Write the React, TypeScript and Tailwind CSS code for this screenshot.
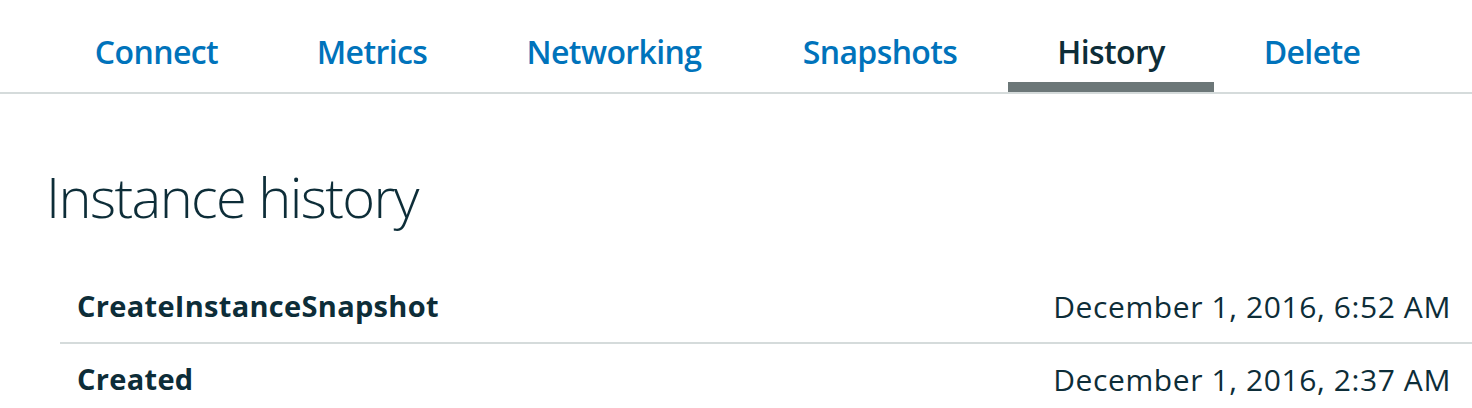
import React from 'react';

const tabs = [
  { label: 'Connect', width: 'w-[223px]' },
  { label: 'Metrics', width: 'w-[208px]' },
  { label: 'Networking', width: 'w-[276px]' },
  { label: 'Snapshots', width: 'w-[256px]' },
  { label: 'History', width: 'w-[206px]', active: true },
  { label: 'Delete', width: 'w-[196px]' },
];

const events = [
  { name: 'CreateInstanceSnapshot', date: 'December 1, 2016, 6:52 AM' },
  { name: 'Created', date: 'December 1, 2016, 2:37 AM' },
];

const App: React.FC = () => {
  return (
    <div
      className="w-[1472px] h-[408px] overflow-hidden bg-white text-[#0d2d38]"
      style={{ fontFamily: '"Open Sans", "Noto Sans", sans-serif' }}
    >
      {/* tab bar */}
      <div className="flex pl-[45px] border-b-2 border-[#d5dbdb]">
        {tabs.map((tab) => (
          <div key={tab.label} className={`${tab.width} h-[92px] flex flex-col items-center`}>
            <span
              className={`pt-[30px] text-[32px] leading-[44px] font-semibold tracking-[-0.6px] ${
                tab.active ? 'text-[#0d2d38]' : 'text-[#0073bb]'
              }`}
            >
              {tab.label}
            </span>
            <div className={`mt-auto h-[10px] w-full ${tab.active ? 'bg-[#6c7778]' : ''}`} />
          </div>
        ))}
      </div>

      {/* heading */}
      <h1 className="pl-[46px] pt-[70px] text-[56px] leading-[64px] font-light tracking-[-1.6px]">
        Instance history
      </h1>

      {/* history list */}
      <div className="ml-[60px] mt-[42px]">
        {events.map((ev, i) => (
          <div
            key={ev.name}
            className={`flex items-center justify-between h-[72px] pl-[17px] pr-[21px] ${
              i > 0 ? 'border-t-2 border-[#d5dbdb]' : ''
            }`}
          >
            <span className="text-[29px] font-bold tracking-[0.3px]">{ev.name}</span>
            <span className="text-[30px] tracking-[0.6px]">{ev.date}</span>
          </div>
        ))}
      </div>
    </div>
  );
};

export default App;
